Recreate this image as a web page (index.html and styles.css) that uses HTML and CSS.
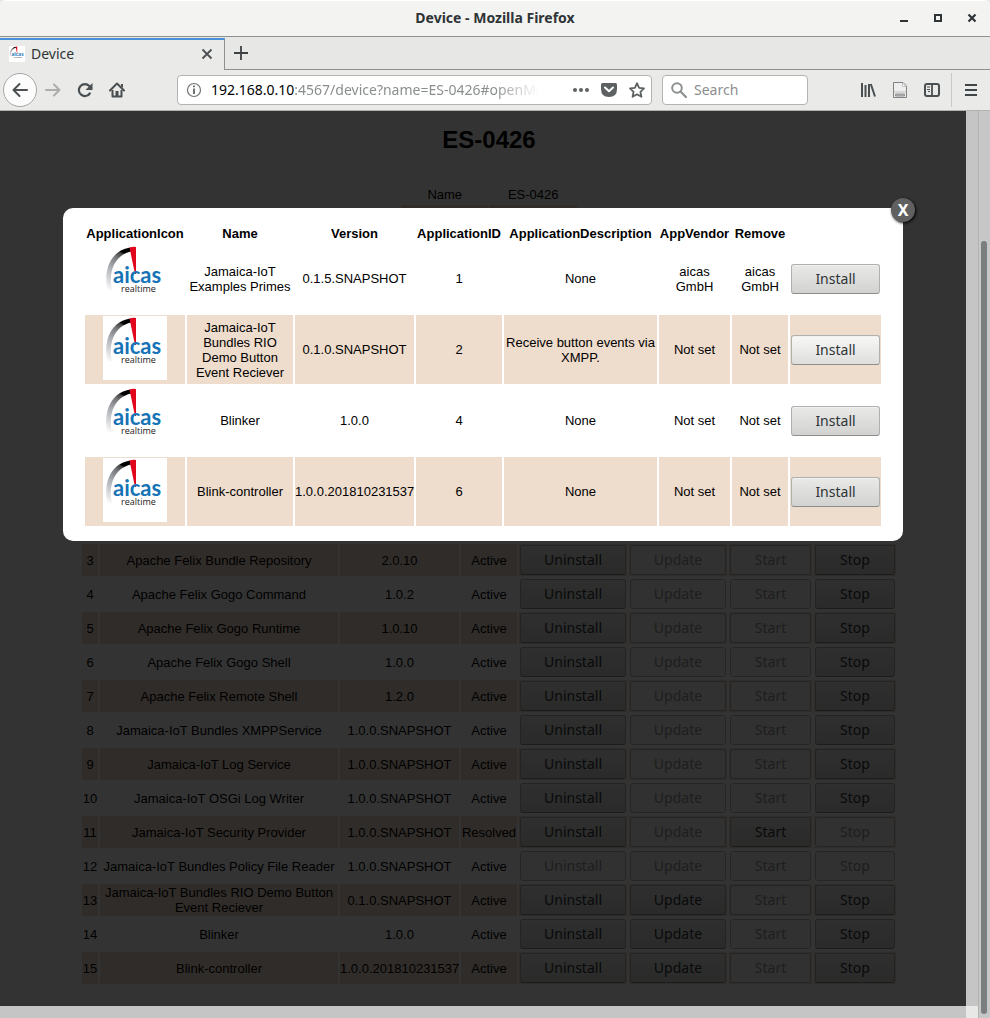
FILE: index.html
```html
<!DOCTYPE html>
<html lang="en">
<head>
<meta charset="utf-8">
<title>Device</title>
<link rel="stylesheet" href="styles.css">
</head>
<body>
<svg class="defs" width="0" height="0" aria-hidden="true">
  <defs>
    <linearGradient id="dial" gradientUnits="userSpaceOnUse" x1="5" y1="46" x2="26" y2="4">
      <stop offset="0" stop-color="#fff"/>
      <stop offset=".45" stop-color="#b0b3b8"/>
      <stop offset=".72" stop-color="#77797c"/>
      <stop offset=".84" stop-color="#444"/>
      <stop offset=".88" stop-color="#000"/>
      <stop offset="1" stop-color="#000"/>
    </linearGradient>
    <symbol id="logo" viewBox="0 0 64 64">
      <rect width="64" height="64" fill="#fff"/>
      <path d="M5 46C0 30 5 6 27 2.500L28 6.500C12 10 5 26 9 45Z" fill="url(#dial)"/>
      <path d="M26.500 2.500Q30 1.500 33 2V29H32Z" fill="#e2061c"/>
      <text x="10" y="38" class="logo-name">aicas</text>
      <text x="18" y="47" class="logo-sub">realtime</text>
    </symbol>
  </defs>
</svg>

<header class="titlebar">
  <div class="title">Device - Mozilla Firefox</div>
  <div class="window-buttons">
    <button aria-label="Minimize"><svg width="10" height="10"><path d="M1 7H9V9H1Z" fill="#2e3436"/></svg></button>
    <button aria-label="Maximize"><svg width="10" height="10"><path d="M2 2H8V8H2Z" fill="none" stroke="#2e3436" stroke-width="2"/></svg></button>
    <button aria-label="Close"><svg width="10" height="10"><path d="M1.500 1.500L8.500 8.500M8.500 1.500L1.500 8.500" stroke="#2e3436" stroke-width="2.200"/></svg></button>
  </div>
</header>

<nav class="tabs">
  <div class="tab">
    <svg width="16" height="16"><use href="#logo"/></svg>
    <span class="tab-title">Device</span>
    <button aria-label="Close tab"><svg width="12" height="12"><path d="M1.500 1.500L10.500 10.500M10.500 1.500L1.500 10.500" stroke="#4a4f51" stroke-width="1.800"/></svg></button>
  </div>
  <div class="tab-rest">
    <button aria-label="New tab"><svg width="14" height="14"><path d="M7 0V14M0 7H14" stroke="#3c4143" stroke-width="1.800"/></svg></button>
  </div>
</nav>

<div class="toolbar">
  <div class="nav">
    <button class="back" aria-label="Back"><svg width="16" height="16" fill="none" stroke="#4a4f51" stroke-width="2" stroke-linecap="round" stroke-linejoin="round"><path d="M15 8H1.500M7.500 2L1.500 8L7.500 14"/></svg></button>
    <button aria-label="Forward" disabled><svg width="16" height="16" fill="none" stroke="#acaead" stroke-width="2" stroke-linecap="round" stroke-linejoin="round"><path d="M1 8H14.500M9 2.500L14.500 8L9 13.500"/></svg></button>
    <button aria-label="Reload"><svg width="16" height="16"><path d="M12.800 11.500A6 6 0 1 1 12.300 4" fill="none" stroke="#4a4f51" stroke-width="2.200" stroke-linecap="round"/><path d="M15.500 1V8H8.500Z" fill="#4a4f51"/></svg></button>
    <button aria-label="Home"><svg width="16" height="16"><path d="M1 8.500L8 1.500L15 8.500" fill="none" stroke="#4a4f51" stroke-width="2" stroke-linecap="round" stroke-linejoin="round"/><path d="M3.500 8V14.500H12.500V8" fill="none" stroke="#4a4f51" stroke-width="2" stroke-linejoin="round"/><path d="M12 2H14V6L12 4ZM6.500 9H9.500V14H6.500Z" fill="#4a4f51"/></svg></button>
  </div>
  <div class="field url">
    <svg width="16" height="16"><circle cx="8" cy="8" r="6.500" fill="none" stroke="#6f7374" stroke-width="1.200"/><path d="M7 3.500H9V5.300H7ZM7 6.500H9V12H7Z" fill="#6f7374"/></svg>
    <label class="host" for="address">192.168.0.10</label>
    <input id="address" type="text" value=":4567/device?name=ES-0426#openModal">
    <button aria-label="Page actions"><svg width="16" height="16" fill="#5d6162"><circle cx="2" cy="8" r="2"/><circle cx="8" cy="8" r="2"/><circle cx="14" cy="8" r="2"/></svg></button>
    <button aria-label="Save to Pocket"><svg width="16" height="16"><path d="M1.500 1H14.500Q16 1 16 2.500V7Q16 15 8 15Q0 15 0 7V2.500Q0 1 1.500 1Z" fill="#5d6162"/><path d="M4 5.500L8 9.300L12 5.500" fill="none" stroke="#fff" stroke-width="2" stroke-linecap="round" stroke-linejoin="round"/></svg></button>
    <button aria-label="Bookmark"><svg width="16" height="16"><path d="M8 1.200L10.100 5.800L15 6.400L11.400 9.800L12.400 14.800L8 12.300L3.600 14.800L4.600 9.800L1 6.400L5.900 5.800Z" fill="none" stroke="#5d6162" stroke-width="1.800" stroke-linejoin="round"/></svg></button>
  </div>
  <div class="field search">
    <svg width="16" height="16"><circle cx="6" cy="6" r="4.800" fill="none" stroke="#8d9091" stroke-width="2"/><path d="M9.500 9.500L15 15" stroke="#8d9091" stroke-width="2.200" stroke-linecap="round"/></svg>
    <input type="search" aria-label="Search" placeholder="Search">
  </div>
  <div class="tools">
    <button aria-label="Library"><svg width="16" height="16" fill="none" stroke="#4a4f51" stroke-width="2"><path d="M2 1V15M5.500 3V15M9 2V15M10.800 2L15 14.500"/></svg></button>
    <button aria-label="Notes"><svg width="16" height="16"><path d="M1.500 .5H11L14.500 4V15.500H1.500Z" fill="#eee" stroke="#808384"/><path d="M10.500 1V4.500H14Z" fill="#fff" stroke="#c4c5c4"/><path d="M2 9H14V11H2Z" fill="#d6d6d5"/><path d="M3.500 12H12.500V14H3.500Z" fill="#b4b5b5" stroke="#929495"/></svg></button>
    <button aria-label="Sidebars"><svg width="16" height="16" fill="none" stroke="#4a4f51"><rect x="1" y="2" width="14" height="12" rx="2" stroke-width="2"/><path d="M8 2V14" stroke-width="1.800"/><path d="M3 5H6M3 7.500H6M4 9.500H6"/></svg></button>
  </div>
  <button class="menu" aria-label="Menu"><svg width="12" height="12"><path d="M0 1H12M0 6H12M0 11H12" stroke="#3f4446" stroke-width="2"/></svg></button>
</div>

<div class="viewport">
  <main class="page">
    <h1>ES-0426</h1>
    <table class="grid info">
      <tr><td>Name</td><td>ES-0426</td></tr>
      <tr><td></td><td></td></tr>
    </table>
    <table class="grid bundles">
      <colgroup><col class="c-no"><col class="c-bundle"><col class="c-version"><col class="c-state"><col class="c-uninstall"><col class="c-update"><col class="c-start"><col class="c-stop"></colgroup>
      <tbody>
      <tr><td>3</td><td>Apache Felix Bundle Repository</td><td>2.0.10</td><td>Active</td><td><button>Uninstall</button></td><td><button disabled>Update</button></td><td><button disabled>Start</button></td><td><button>Stop</button></td></tr>
      <tr><td>4</td><td>Apache Felix Gogo Command</td><td>1.0.2</td><td>Active</td><td><button>Uninstall</button></td><td><button disabled>Update</button></td><td><button disabled>Start</button></td><td><button>Stop</button></td></tr>
      <tr><td>5</td><td>Apache Felix Gogo Runtime</td><td>1.0.10</td><td>Active</td><td><button>Uninstall</button></td><td><button disabled>Update</button></td><td><button disabled>Start</button></td><td><button>Stop</button></td></tr>
      <tr><td>6</td><td>Apache Felix Gogo Shell</td><td>1.0.0</td><td>Active</td><td><button>Uninstall</button></td><td><button disabled>Update</button></td><td><button disabled>Start</button></td><td><button>Stop</button></td></tr>
      <tr><td>7</td><td>Apache Felix Remote Shell</td><td>1.2.0</td><td>Active</td><td><button>Uninstall</button></td><td><button disabled>Update</button></td><td><button disabled>Start</button></td><td><button>Stop</button></td></tr>
      <tr><td>8</td><td>Jamaica-IoT Bundles XMPPService</td><td>1.0.0.SNAPSHOT</td><td>Active</td><td><button>Uninstall</button></td><td><button disabled>Update</button></td><td><button disabled>Start</button></td><td><button>Stop</button></td></tr>
      <tr><td>9</td><td>Jamaica-IoT Log Service</td><td>1.0.0.SNAPSHOT</td><td>Active</td><td><button>Uninstall</button></td><td><button disabled>Update</button></td><td><button disabled>Start</button></td><td><button>Stop</button></td></tr>
      <tr><td>10</td><td>Jamaica-IoT OSGi Log Writer</td><td>1.0.0.SNAPSHOT</td><td>Active</td><td><button>Uninstall</button></td><td><button disabled>Update</button></td><td><button disabled>Start</button></td><td><button>Stop</button></td></tr>
      <tr><td>11</td><td>Jamaica-IoT Security Provider</td><td>1.0.0.SNAPSHOT</td><td>Resolved</td><td><button>Uninstall</button></td><td><button disabled>Update</button></td><td><button>Start</button></td><td><button disabled>Stop</button></td></tr>
      <tr><td>12</td><td>Jamaica-IoT Bundles Policy File Reader</td><td>1.0.0.SNAPSHOT</td><td>Active</td><td><button disabled>Uninstall</button></td><td><button disabled>Update</button></td><td><button disabled>Start</button></td><td><button disabled>Stop</button></td></tr>
      <tr><td>13</td><td>Jamaica-IoT Bundles RIO Demo Button<br>Event Reciever</td><td>0.1.0.SNAPSHOT</td><td>Active</td><td><button>Uninstall</button></td><td><button>Update</button></td><td><button disabled>Start</button></td><td><button>Stop</button></td></tr>
      <tr><td>14</td><td>Blinker</td><td>1.0.0</td><td>Active</td><td><button>Uninstall</button></td><td><button>Update</button></td><td><button disabled>Start</button></td><td><button>Stop</button></td></tr>
      <tr><td>15</td><td>Blink-controller</td><td>1.0.0.201810231537</td><td>Active</td><td><button>Uninstall</button></td><td><button>Update</button></td><td><button disabled>Start</button></td><td><button>Stop</button></td></tr>
      </tbody>
    </table>

    <div class="overlay">
      <div class="modal" role="dialog" aria-label="Install application">
        <a class="close" href="#close">X</a>
        <table class="grid apps">
          <colgroup><col class="c-icon"><col class="c-name"><col class="c-version"><col class="c-id"><col class="c-desc"><col class="c-vendor"><col class="c-remove"><col class="c-install"></colgroup>
          <thead>
            <tr><th>ApplicationIcon</th><th>Name</th><th>Version</th><th>ApplicationID</th><th>ApplicationDescription</th><th>AppVendor</th><th>Remove</th><th></th></tr>
          </thead>
          <tbody>
            <tr><td><svg width="64" height="64"><use href="#logo"/></svg></td><td>Jamaica-IoT<br>Examples Primes</td><td>0.1.5.SNAPSHOT</td><td>1</td><td>None</td><td>aicas<br>GmbH</td><td>aicas<br>GmbH</td><td><button>Install</button></td></tr>
            <tr><td><svg width="64" height="64"><use href="#logo"/></svg></td><td>Jamaica-IoT<br>Bundles RIO<br>Demo Button<br>Event Reciever</td><td>0.1.0.SNAPSHOT</td><td>2</td><td>Receive button events via<br>XMPP.</td><td>Not set</td><td>Not set</td><td><button class="hover">Install</button></td></tr>
            <tr><td><svg width="64" height="64"><use href="#logo"/></svg></td><td>Blinker</td><td>1.0.0</td><td>4</td><td>None</td><td>Not set</td><td>Not set</td><td><button>Install</button></td></tr>
            <tr><td><svg width="64" height="64"><use href="#logo"/></svg></td><td>Blink-controller</td><td>1.0.0.201810231537</td><td>6</td><td>None</td><td>Not set</td><td>Not set</td><td><button>Install</button></td></tr>
          </tbody>
        </table>
      </div>
    </div>
  </main>
  <div class="track-inner"></div>
  <div class="track-outer"><div class="thumb"></div></div>
  <div class="track-bottom"></div>
  <div class="corner"></div>
</div>
</body>
</html>
```
FILE: styles.css
```css
* { box-sizing: border-box; }

body {
  margin: 0;
  min-height: 100vh;
  display: flex;
  flex-direction: column;
  background: #e9e9e7;
  font: 14px/20px "Noto Sans", "Open Sans", sans-serif;
  color: #2e3436;
}

button { font: inherit; color: inherit; margin: 0; padding: 0; }
svg { flex: none; }
.defs { position: absolute; }
.logo-name { font: 700 22px Lato, sans-serif; fill: #1673b5; }
.logo-sub { font: 9px "Open Sans", sans-serif; fill: #222; }

/* window title */
.titlebar {
  height: 37px;
  display: grid;
  grid-template-columns: 1fr auto 1fr;
  align-items: center;
  padding-bottom: 1px;
  background: #f3f3f2;
  border-top: 1px solid #fff;
  border-bottom: 1px solid #8f918e;
  border-radius: 6px 6px 0 0;
}
.title { grid-column: 2; font-weight: 700; }
.window-buttons { display: flex; justify-content: flex-end; gap: 2px; padding-right: 2px; }
.window-buttons button { width: 32px; }
.titlebar button, .tabs button, .toolbar button {
  display: flex;
  align-items: center;
  justify-content: center;
  border: 0;
  background: none;
}

/* tab strip */
.tabs { display: flex; height: 33px; background: #e7e7e5; }
.tab {
  width: 225px;
  display: flex;
  align-items: center;
  gap: 6px;
  padding: 0 11px 2px 9px;
  margin-top: 1px;
  background: #eaeae8;
  border-top: 2px solid #4a90d9;
  border-right: 1px solid #8f918e;
}
.tab-title { flex: 1; }
.tab-rest {
  flex: 1;
  display: flex;
  padding-left: 9px;
  border-bottom: 1px solid #8f918e;
}

/* toolbar */
.toolbar {
  height: 41px;
  display: flex;
  align-items: center;
  padding: 0 3px;
  background: #eaeae8;
  border-bottom: 1px solid #b2b3b1;
}
.nav { display: flex; align-items: center; margin-right: 44px; }
.toolbar button { width: 32px; height: 34px; }
.toolbar .back {
  width: 34px;
  background: #fcfcfc;
  border: 1px solid #a5a7a5;
  border-radius: 50%;
}
.field {
  display: flex;
  align-items: center;
  height: 30px;
  background: #fff;
  border: 1px solid #b2b4b1;
  border-radius: 4px;
}
.field input {
  flex: 1;
  min-width: 0;
  padding: 0;
  border: 0;
  outline: 0;
  background: none;
  font: inherit;
  color: #8b8e8f;
}
.field input::placeholder { color: #8b8e8f; opacity: 1; }
.url { flex: 1; padding: 0 0 0 8px; }
.host { margin-left: 9px; color: #000; }
.url input {
  margin-right: 28px;
  -webkit-mask-image: linear-gradient(to left, transparent, #000 44px);
  mask-image: linear-gradient(to left, transparent, #000 44px);
}
.url button { width: 28px; height: 28px; }
.search { width: 146px; margin: 0 44px 0 10px; padding: 0 8px; gap: 7px; }
.tools { display: flex; padding-right: 3px; margin-right: 3px; border-right: 1px solid #c9cac8; }

/* page area with its scroll tracks */
.viewport {
  flex: 1;
  display: grid;
  grid-template-columns: 1fr 12px 12px;
  grid-template-rows: 1fr 12px;
}
.page {
  position: relative;
  padding: 15px 0 20px 12px;
  background: #fff;
  color: #000;
  font: 13px/15px "Liberation Sans", Arial, sans-serif;
}
.track-inner { background: #c4c5c4; }
.track-outer {
  grid-column: 3;
  grid-row: 1 / 3;
  display: flex;
  padding: 130px 3px 4px 2px;
  background: #c6c7c6;
  border-left: 1px solid #b2b4b2;
}
.thumb { flex: 1; border-radius: 3px; background: #7a7e7f; }
.track-bottom { grid-row: 2; grid-column: 1; background: #c4c5c4; }
.corner { grid-row: 2; grid-column: 2; background: #e8e8e7; }

h1 { margin: 0 0 30px; font-size: 24px; line-height: 28px; text-align: center; }

.grid {
  table-layout: fixed;
  margin: 0 auto;
  border-spacing: 2px;
  text-align: center;
  white-space: nowrap;
}
.grid td, .grid th { padding: 1px 0; }
.grid svg { display: block; margin: 0 auto 3px; }
.grid button {
  display: block;
  width: calc(100% - 2px);
  height: 30px;
  margin: 0 auto;
  border: 1px solid #b0b1ae;
  border-bottom-color: #8b8e8b;
  border-radius: 3px;
  background: linear-gradient(#e9e9e7, #d2d3d1);
  box-shadow: inset 0 1px #f1f1f0;
  color: #2e3436;
  font: 14px/20px "Noto Sans", "Open Sans", sans-serif;
}
.grid button.hover { background: linear-gradient(#f8f8f7, #dedfdd); }
.grid button:disabled {
  background: #f3f3f2;
  border-color: #b9bab7;
  box-shadow: none;
  color: #949796;
}

.info { width: 179px; }
.info tr { height: 17px; }
.bundles { width: 818px; margin-top: 318px; }
.info tr:nth-child(even) td,
.bundles tr:nth-child(odd) td,
.apps tbody tr:nth-child(even) td { background: #eedccc; }

.c-no { width: 16px; }
.c-bundle { width: 238px; }
.c-version { width: 119px; }
.c-state { width: 56px; }
.c-uninstall { width: 108px; }
.c-update { width: 98px; }
.c-start { width: 83px; }
.c-stop { width: 82px; }

.overlay {
  position: absolute;
  inset: 0;
  padding-top: 97px;
  background: rgba(0, 0, 0, .8);
}
.modal {
  position: relative;
  width: 840px;
  max-width: 100%;
  margin: 0 auto;
  padding: 15px 20px 13px;
  border-radius: 10px;
  background: #fff;
}
.apps { width: 800px; }
.c-icon { width: 100px; }
.c-name { width: 106px; }
.c-id { width: 86px; }
.c-desc { width: 153px; }
.c-vendor { width: 71px; }
.c-remove { width: 56px; }
.c-install { width: 91px; }

.close {
  position: absolute;
  top: -10px;
  right: -12px;
  width: 24px;
  height: 24px;
  border-radius: 50%;
  background: #606061;
  box-shadow: 1px 1px 3px #000;
  color: #fff;
  font: 700 16px/24px "Noto Sans", "Open Sans", sans-serif;
  text-align: center;
  text-decoration: none;
}
```
